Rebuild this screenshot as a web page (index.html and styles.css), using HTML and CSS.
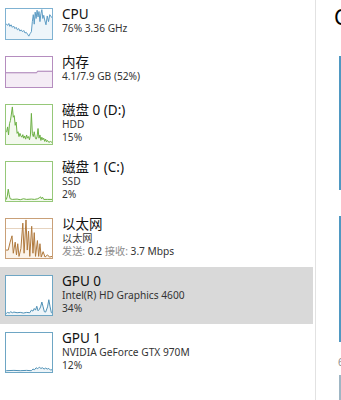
FILE: index.html
```html
<!DOCTYPE html>
<html lang="zh-CN">
<head>
<meta charset="utf-8">
<title>任务管理器 - 性能</title>
<link rel="stylesheet" href="styles.css">
</head>
<body>
<div class="app">
  <div class="list">
    <div class="row short">
      <div class="thumb cpu">
        <svg viewBox="15 20 145 95" preserveAspectRatio="none">
          <polygon class="fill" points="15,68 17,68 20,72 24,66 27,75 31,70 35,78 39,74 43,82 47,78 51,86 55,82 59,90 63,86 67,92 71,88 75,96 79,94 83,100 87,106 91,98 95,92 98,60 101,38 104,68 107,30 110,50 113,24 116,45 119,28 122,60 125,35 128,22 131,50 134,40 137,55 141,70 145,42 149,60 153,38 160,48 160,115 15,115"/>
          <polyline class="line" points="15,68 17,68 20,72 24,66 27,75 31,70 35,78 39,74 43,82 47,78 51,86 55,82 59,90 63,86 67,92 71,88 75,96 79,94 83,100 87,106 91,98 95,92 98,60 101,38 104,68 107,30 110,50 113,24 116,45 119,28 122,60 125,35 128,22 131,50 134,40 137,55 141,70 145,42 149,60 153,38 160,48"/>
        </svg>
      </div>
      <div class="info">
        <div class="title">CPU</div>
        <div class="sub">76% 3.36 GHz</div>
      </div>
    </div>

    <div class="row short">
      <div class="thumb mem">
        <svg viewBox="15 168 145 97" preserveAspectRatio="none">
          <polygon class="fill" points="15,219 112,219 114,214 160,214 160,265 15,265"/>
          <polyline class="line" points="15,219 112,219 114,214 160,214"/>
        </svg>
      </div>
      <div class="info">
        <div class="title">内存</div>
        <div class="sub">4.1/7.9 GB (52%)</div>
      </div>
    </div>

    <div class="row">
      <div class="thumb disk">
        <svg viewBox="15 12 145 121" preserveAspectRatio="none">
          <polygon class="fill" points="15,95 17,95 20,80 23,105 26,70 29,60 32,40 35,18 38,50 41,45 44,75 47,65 50,100 53,95 56,110 59,100 62,108 65,112 68,104 71,115 74,108 77,118 80,105 83,115 86,110 89,120 92,105 95,38 98,100 101,110 104,95 107,112 110,118 113,110 116,85 119,115 122,105 125,122 128,112 131,120 134,115 137,125 140,118 143,126 146,122 150,128 155,125 160,128 160,133 15,133"/>
          <polyline class="line" points="15,95 17,95 20,80 23,105 26,70 29,60 32,40 35,18 38,50 41,45 44,75 47,65 50,100 53,95 56,110 59,100 62,108 65,112 68,104 71,115 74,108 77,118 80,105 83,115 86,110 89,120 92,105 95,38 98,100 101,110 104,95 107,112 110,118 113,110 116,85 119,115 122,105 125,122 128,112 131,120 134,115 137,125 140,118 143,126 146,122 150,128 155,125 160,128"/>
        </svg>
      </div>
      <div class="info">
        <div class="title">磁盘 0 (D:)</div>
        <div class="sub">HDD</div>
        <div class="sub">15%</div>
      </div>
    </div>

    <div class="row">
      <div class="thumb disk">
        <svg viewBox="15 183 145 122" preserveAspectRatio="none">
          <polygon class="fill" points="15,300 16,300 19,290 22,268 25,285 28,298 35,300 50,299 60,301 70,298 80,300 95,299 105,300 115,298 120,295 124,292 127,298 130,293 134,300 145,300 160,300 160,305 15,305"/>
          <polyline class="line" points="15,300 16,300 19,290 22,268 25,285 28,298 35,300 50,299 60,301 70,298 80,300 95,299 105,300 115,298 120,295 124,292 127,298 130,293 134,300 145,300 160,300"/>
        </svg>
      </div>
      <div class="info">
        <div class="title">磁盘 1 (C:)</div>
        <div class="sub">SSD</div>
        <div class="sub">2%</div>
      </div>
    </div>

    <div class="row">
      <div class="thumb eth">
        <svg viewBox="15 22 145 123" preserveAspectRatio="none">
          <line class="grid" x1="15" y1="52" x2="160" y2="52"/>
          <polygon class="fill" points="15,120 22,120 28,95 34,75 38,130 44,95 48,135 52,100 56,140 62,115 68,35 72,130 78,25 82,120 86,60 90,140 96,45 100,130 104,65 108,140 114,90 118,140 122,100 126,142 132,125 138,142 146,135 152,142 160,140 160,145 15,145"/>
          <polyline class="line" points="15,120 22,120 28,95 34,75 38,130 44,95 48,135 52,100 56,140 62,115 68,35 72,130 78,25 82,120 86,60 90,140 96,45 100,130 104,65 108,140 114,90 118,140 122,100 126,142 132,125 138,142 146,135 152,142 160,140"/>
        </svg>
      </div>
      <div class="info">
        <div class="title">以太网</div>
        <div class="sub">以太网</div>
        <div class="sub"><span class="lbl">发送:</span> 0.2 <span class="lbl">接收:</span> 3.7 Mbps</div>
      </div>
    </div>

    <div class="row selected">
      <div class="thumb gpu">
        <svg viewBox="15 45 145 120" preserveAspectRatio="none">
          <polygon class="fill" points="15,160 16,160 20,157 25,159 30,155 35,158 40,156 50,158 60,157 70,159 80,157 90,158 95,150 100,153 104,145 108,150 112,138 116,152 120,148 124,140 128,125 132,140 136,155 140,156 146,140 150,118 154,140 158,158 160,158 160,165 15,165"/>
          <polyline class="line" points="15,160 16,160 20,157 25,159 30,155 35,158 40,156 50,158 60,157 70,159 80,157 90,158 95,150 100,153 104,145 108,150 112,138 116,152 120,148 124,140 128,125 132,140 136,155 140,156 146,140 150,118 154,140 158,158 160,158"/>
        </svg>
      </div>
      <div class="info">
        <div class="title">GPU 0</div>
        <div class="sub">Intel(R) HD Graphics 4600</div>
        <div class="sub">34%</div>
      </div>
    </div>

    <div class="row">
      <div class="thumb gpu">
        <svg viewBox="15 215 145 120" preserveAspectRatio="none">
          <polygon class="fill" points="15,331 16,331 40,330 60,331 80,330 95,331 100,326 105,328 110,322 115,325 120,320 125,324 130,322 135,326 140,323 145,326 150,324 155,329 160,328 160,335 15,335"/>
          <polyline class="line" points="15,331 16,331 40,330 60,331 80,330 95,331 100,326 105,328 110,322 115,325 120,320 125,324 130,322 135,326 140,323 145,326 150,324 155,329 160,328"/>
        </svg>
      </div>
      <div class="info">
        <div class="title">GPU 1</div>
        <div class="sub">NVIDIA GeForce GTX 970M</div>
        <div class="sub">12%</div>
      </div>
    </div>
  </div>

  <div class="divider"></div>

  <div class="detail">
    <div class="heading">CPU</div>
    <div class="graph g1"></div>
    <div class="graph g2"></div>
    <div class="axis">60 秒</div>
    <div class="graph g3"></div>
  </div>
</div>
</body>
</html>
```

FILE: styles.css
```css
* { box-sizing: border-box; }

html, body {
  margin: 0;
  padding: 0;
  background: #ffffff;
}

body {
  font-family: "Noto Sans", "Noto Sans CJK SC", sans-serif;
  color: #111;
}

.app {
  display: flex;
  width: 341px;
  height: 400px;
  overflow: hidden;
}

.list {
  flex: 0 0 315px;
  display: flex;
  flex-direction: column;
}

.row {
  flex-shrink: 0;
  display: flex;
  align-items: flex-start;
  gap: 9px;
  width: 313px;
  padding: 8px 0 8px 5px;
}

.row.selected {
  background: #d9d9d9;
}

.thumb {
  flex: 0 0 48px;
  height: 41px;
  border: 1px solid;
  background: #fff;
}

.row.short .thumb {
  height: 32px;
}

.thumb svg {
  display: block;
  width: 100%;
  height: 100%;
}

.thumb .line {
  fill: none;
  stroke-width: 1;
  vector-effect: non-scaling-stroke;
  stroke-linejoin: round;
}

.thumb .grid {
  stroke-width: 1;
  vector-effect: non-scaling-stroke;
}

.thumb.cpu { border-color: #7fb2d2; }
.thumb.cpu .fill { fill: #eef5fa; }
.thumb.cpu .line { stroke: #5d9cc4; }

.thumb.mem { border-color: #b58dbf; }
.thumb.mem .fill { fill: #f4ecf5; }
.thumb.mem .line { stroke: #a77bb3; }

.thumb.disk { border-color: #96c879; }
.thumb.disk .fill { fill: #f3f9ee; }
.thumb.disk .line { stroke: #6cb044; }

.thumb.eth { border-color: #c9a078; }
.thumb.eth .fill { fill: #fbf3ea; }
.thumb.eth .line { stroke: #b07a3e; }
.thumb.eth .grid { stroke: #e6d3bf; }

.thumb.gpu { border-color: #6ea6c4; }
.thumb.gpu .fill { fill: #eef5f9; }
.thumb.gpu .line { stroke: #4f91b6; }

.info {
  display: flex;
  flex-direction: column;
  margin-top: -2px;
}

.title {
  font-size: 13.5px;
  line-height: 16px;
  color: #111;
  white-space: nowrap;
}

.sub {
  font-size: 10.2px;
  line-height: 13px;
  color: #333;
  white-space: nowrap;
}

.lbl {
  color: #8c8c8c;
}

.divider {
  flex: 0 0 1px;
  background: #e2e2e2;
}

.detail {
  flex: 1 0 auto;
  display: flex;
  flex-direction: column;
  padding: 3px 0 0 18px;
  width: 300px;
  overflow: hidden;
}

.detail > * {
  flex-shrink: 0;
}

.heading {
  font-size: 21px;
  line-height: 28px;
  color: #000;
  white-space: nowrap;
}

.graph {
  margin-left: 5px;
  width: 260px;
  border-left: 2px solid #4f98c2;
}

.g1 {
  margin-top: 25px;
  height: 134px;
}

.g2 {
  margin-top: 26px;
  height: 126px;
}

.axis {
  margin-top: 14px;
  margin-left: 4px;
  font-size: 10px;
  line-height: 12px;
  color: #8c8c8c;
  white-space: nowrap;
}

.g3 {
  margin-top: 7px;
  height: 60px;
  border-left: 2px solid #9fb6c4;
}
```
